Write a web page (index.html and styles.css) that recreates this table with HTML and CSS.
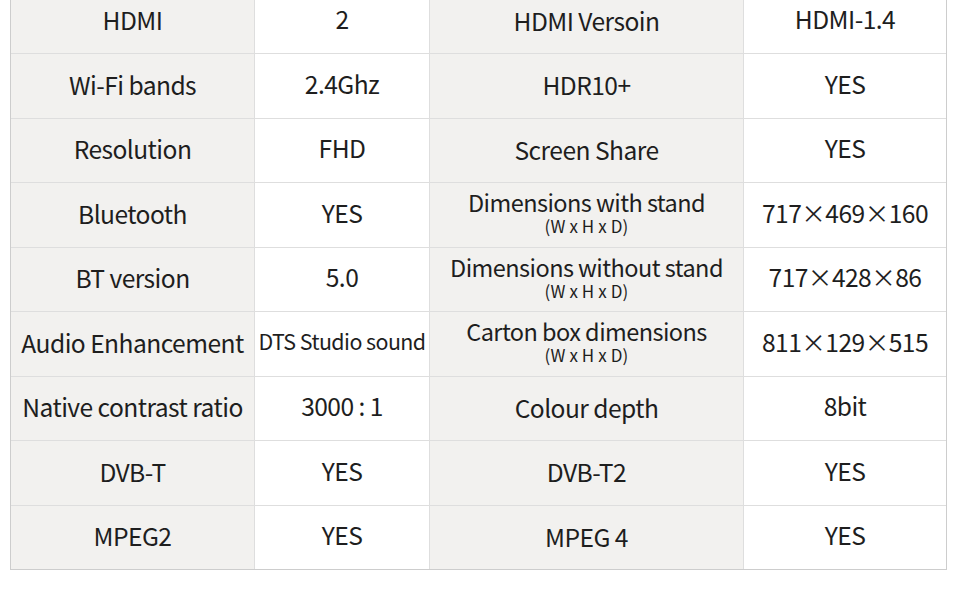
FILE: index.html
```html
<!DOCTYPE html>
<html>
<head>
<meta charset="utf-8">
<link rel="stylesheet" href="styles.css">
</head>
<body>
<div class="spec">
  <div class="cell lab">HDMI</div><div class="cell val">2</div><div class="cell lab mid">HDMI Versoin</div><div class="cell val">HDMI-1.4</div>
  <div class="cell lab">Wi-Fi bands</div><div class="cell val">2.4Ghz</div><div class="cell lab mid">HDR10+</div><div class="cell val">YES</div>
  <div class="cell lab">Resolution</div><div class="cell val">FHD</div><div class="cell lab mid">Screen Share</div><div class="cell val">YES</div>
  <div class="cell lab">Bluetooth</div><div class="cell val">YES</div><div class="cell lab two"><span class="main">Dimensions with stand</span><span class="sub">(W x H x D)</span></div><div class="cell val">717×469×160</div>
  <div class="cell lab">BT version</div><div class="cell val">5.0</div><div class="cell lab two"><span class="main">Dimensions without stand</span><span class="sub">(W x H x D)</span></div><div class="cell val">717×428×86</div>
  <div class="cell lab">Audio Enhancement</div><div class="cell val small">DTS Studio sound</div><div class="cell lab two"><span class="main">Carton box dimensions</span><span class="sub">(W x H x D)</span></div><div class="cell val">811×129×515</div>
  <div class="cell lab">Native contrast ratio</div><div class="cell val">3000 : 1</div><div class="cell lab mid">Colour depth</div><div class="cell val">8bit</div>
  <div class="cell lab">DVB-T</div><div class="cell val">YES</div><div class="cell lab mid">DVB-T2</div><div class="cell val">YES</div>
  <div class="cell lab">MPEG2</div><div class="cell val">YES</div><div class="cell lab mid">MPEG 4</div><div class="cell val">YES</div>
</div>
</body>
</html>
```
FILE: styles.css
```css
html, body {
  margin: 0;
  padding: 0;
  background: #ffffff;
}
body {
  font-family: "Noto Sans CJK SC", "Noto Sans", sans-serif;
  color: #1e1e1e;
  overflow: hidden;
}
.spec {
  display: grid;
  grid-template-columns: 243px 174px 313px 202px;
  grid-auto-rows: 63.5px;
  gap: 1px;
  width: 935px;
  margin: -11.5px 0 0 10px;
  background: #dedede;
  border: 1px solid #cdcdcd;
}
.cell {
  display: flex;
  flex-direction: column;
  align-items: center;
  justify-content: center;
  font-size: 24.6px;
  letter-spacing: -0.55px;
  line-height: 30px;
  white-space: nowrap;
  overflow: hidden;
}
.lab { background: #f2f1ef; padding-bottom: 4px; }
.val { background: #ffffff; padding-bottom: 6px; }
.lab.mid { padding-bottom: 3px; }
.small { font-size: 21.4px; }
.lab.two { padding-bottom: 5px; }
.main {
  display: block;
  font-size: 23.5px;
  line-height: 26px;
}
.sub {
  display: block;
  margin-top: 2px;
  font-size: 17px;
  letter-spacing: 0.1px;
  line-height: 18px;
}
```
